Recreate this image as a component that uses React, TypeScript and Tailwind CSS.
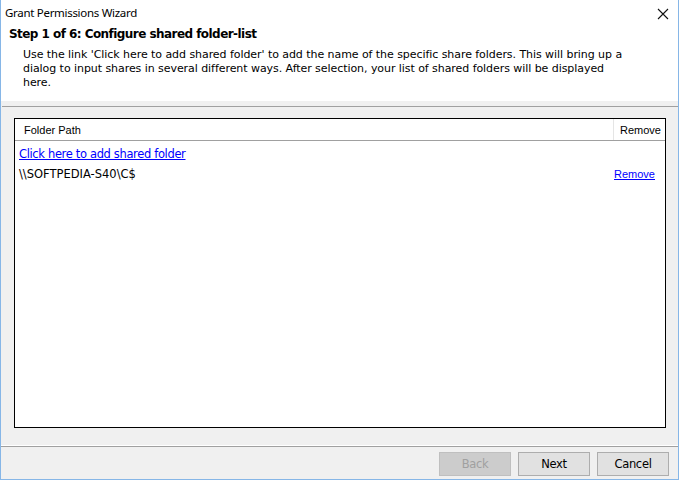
import React from "react";

export default function App() {
  return (
    <div className="w-[679px] h-[480px] bg-[#f0f0f0] border-l border-r border-b border-[#86b6e7] flex flex-col overflow-hidden relative">
      {/* Header */}
      <div className="bg-white h-[101px] flex flex-col shrink-0">
        <div className="h-[26px] flex items-center justify-between pl-[4px] pr-[9px] shrink-0">
          <span className="text-[11.5px] text-black leading-none tracking-[-0.3px]" style={{ fontFamily: '"Noto Sans", sans-serif' }}>
            Grant Permissions Wizard
          </span>
          <svg width="12" height="12" viewBox="0 0 12 12" className="mt-[1px]">
            <path d="M1 1 L11 11 M11 1 L1 11" stroke="#111" strokeWidth="1.1" />
          </svg>
        </div>
        <div
          className="pl-[8px] text-[12px] font-bold text-black leading-[16px] tracking-[-0.55px]"
          style={{ fontFamily: '"DejaVu Sans", sans-serif' }}
        >
          Step 1 of 6: Configure shared folder-list
        </div>
        <div
          className="pl-[22px] pt-[6px] text-[11px] text-black leading-[14px] tracking-[-0.06px] whitespace-nowrap"
          style={{ fontFamily: '"DejaVu Sans", sans-serif' }}
        >
          <div>Use the link 'Click here to add shared folder' to add the name of the specific share folders. This will bring up a</div>
          <div>dialog to input shares in several different ways. After selection, your list of shared folders will be displayed</div>
          <div>here.</div>
        </div>
      </div>
      <div className="h-[5px] shrink-0" />
      <div className="h-px bg-[#a0a0a0] shrink-0 ml-[1px]" />
      {/* Body */}
      <div className="pt-[11px] pl-[13px] pr-[12px] shrink-0">
        <div className="h-[310px] border border-black bg-white flex flex-col relative">
          <div
            className="h-[22px] flex border-b border-[#a0a0a0] text-[11px] text-black shrink-0 relative"
            style={{ fontFamily: '"Liberation Sans", Arial, sans-serif' }}
          >
            <div className="flex-1 flex items-center pl-[9px] pt-[1px]">Folder Path</div>
            <div className="w-[52px] border-l border-[#e5e5e5] flex items-center pl-[6px] pt-[1px]">Remove</div>
          </div>
          <div className="pl-[4px] pt-[4px] pr-[9px] relative" style={{ fontFamily: '"DejaVu Sans", sans-serif' }}>
            <div className="h-[20px] flex items-center">
              <span className="text-[11.5px] text-[#0000ff] underline tracking-[-0.35px]">Click here to add shared folder</span>
            </div>
            <div className="h-[20px] flex items-center justify-between">
              <span className="text-[11.5px] text-black tracking-[0px]">\\SOFTPEDIA-S40\C$</span>
              <span
                className="text-[11px] text-[#0000ff] underline pr-[1px] mb-[1px]"
                style={{ fontFamily: '"Liberation Sans", Arial, sans-serif' }}
              >
                Remove
              </span>
            </div>
          </div>
        </div>
      </div>
      <div className="h-[17px] shrink-0" />
      <div className="h-px bg-white shrink-0" />
      <div className="h-px bg-[#a0a0a0] shrink-0" />
      {/* Footer */}
      <div className="pt-[5px] pr-[9px] flex justify-end gap-[7px] shrink-0" style={{ fontFamily: '"DejaVu Sans", sans-serif' }}>
        <div className="w-[72px] h-[24px] bg-[#cccccc] border border-[#bfbfbf] flex items-center justify-center pt-[1px] text-[11.5px] text-[#a0a0a0] tracking-[-0.3px]">
          Back
        </div>
        <div className="w-[72px] h-[24px] bg-[#e1e1e1] border border-[#adadad] flex items-center justify-center pt-[1px] text-[11.5px] text-black tracking-[-0.3px]">
          Next
        </div>
        <div className="w-[72px] h-[24px] bg-[#e1e1e1] border border-[#adadad] flex items-center justify-center pt-[1px] text-[11.5px] text-black tracking-[-0.3px]">
          Cancel
        </div>
      </div>
    </div>
  );
}
